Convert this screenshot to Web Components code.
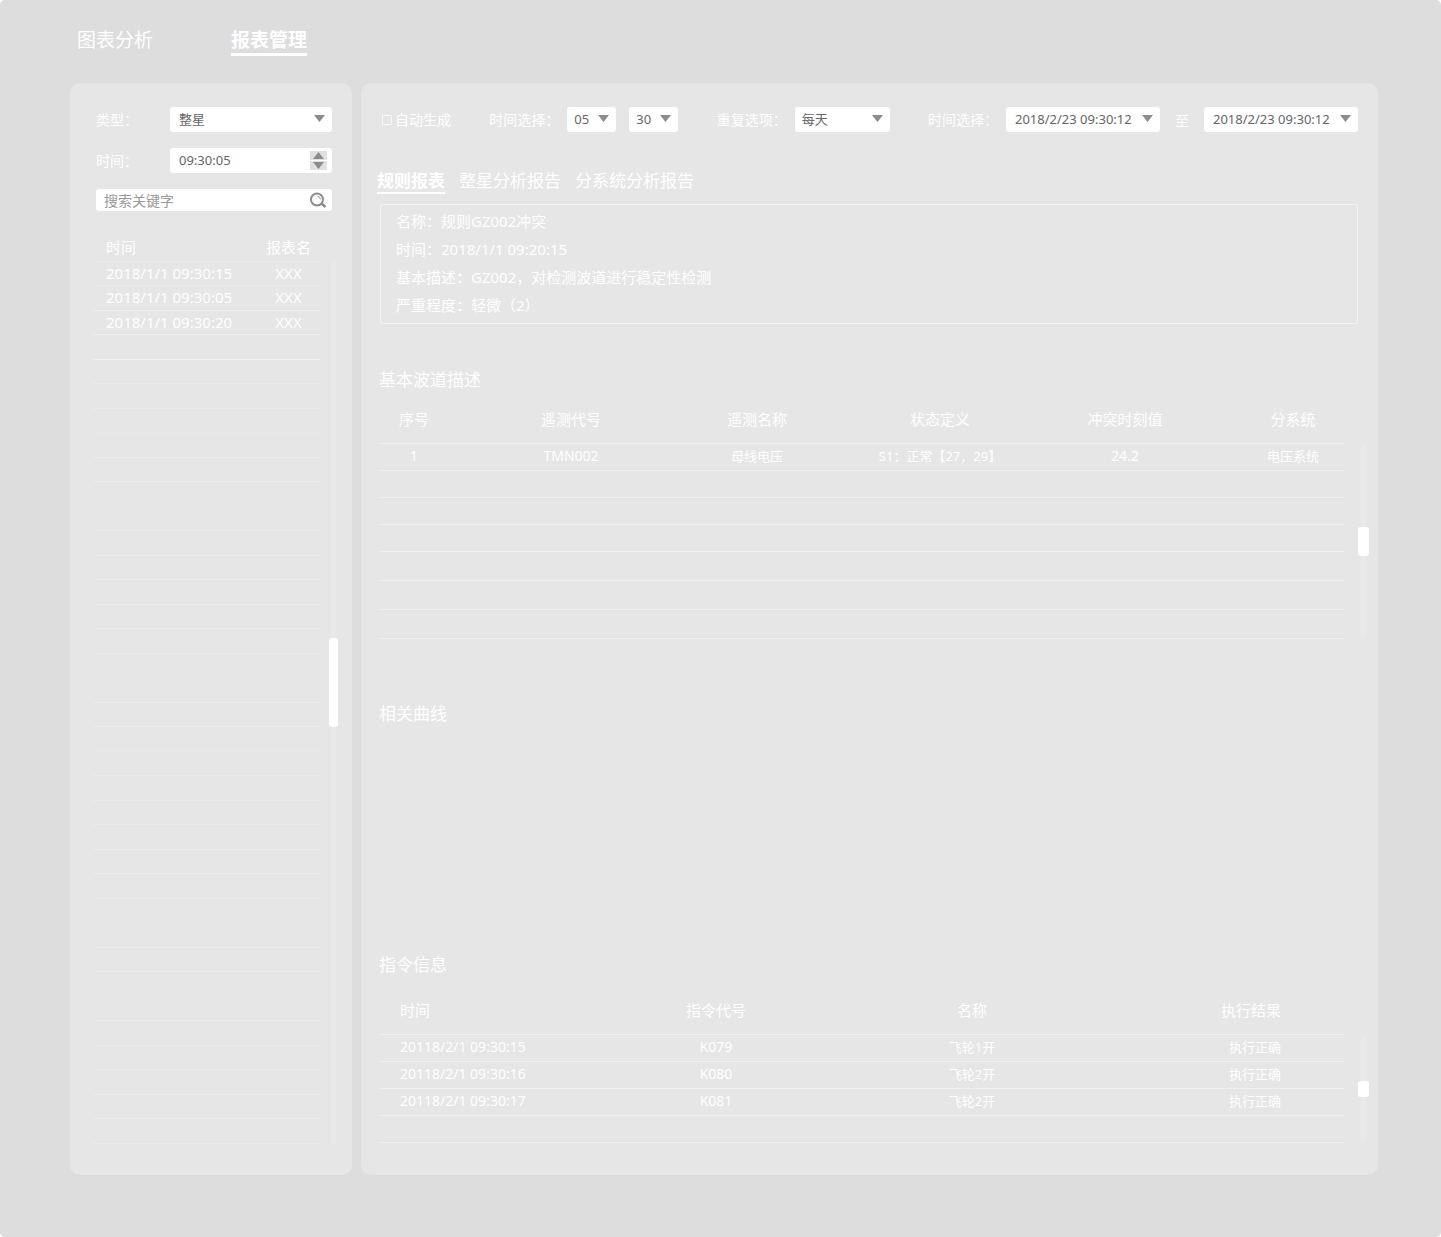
<!DOCTYPE html>
<html lang="zh-CN">
<head>
<meta charset="utf-8">
<title>报表管理</title>
<style>
  html, body { margin: 0; background: #fff; }
  body {
    font-family: "Noto Sans", "Noto Sans CJK SC", sans-serif;
    font-size: 14px;
    color: #fff;
    --page: #ddd;
    --panel: #e6e6e6;
    --line: #f0f0f0;
    --line-soft: #ebebeb;
    --line-faint: #e8e8e8;
    --ink: #666;
    --icon: #8c8c8c;
  }
</style>
</head>
<body>
<report-page></report-page>

<script>
const base = `
  *, *::before, *::after { box-sizing: border-box; }
  button, input, select { font: inherit; color: inherit; margin: 0; border: 0; padding: 0; background: none; }
`;

function define(name, render) {
  customElements.define(name, class extends HTMLElement {
    connectedCallback() {
      if (this.shadowRoot) return;
      this.attachShadow({ mode: 'open' });
      this.shadowRoot.innerHTML = `<style>${base}</style>` + render(this);
    }
  });
}

/* Top navigation */
define('top-nav', () => `
  <style>
    :host { display: block; padding: 27px 77px; }
    nav { display: flex; gap: 78px; }
    a { color: #fff; text-decoration: none; font-size: 19px; line-height: 26px; border-bottom: 3px solid transparent; }
    a[aria-current] { font-weight: 700; border-color: #fff; }
  </style>
  <nav>
    <a href="#charts">图表分析</a>
    <a href="#reports" aria-current="page">报表管理</a>
  </nav>`);

/* Rounded panel */
define('side-panel', () => `
  <style>:host { display: flex; flex-direction: column; background: var(--panel); border-radius: 10px; }</style>
  <slot></slot>`);

/* Labelled drop-down */
define('select-field', el => {
  const label = el.getAttribute('label');
  const options = el.getAttribute('options').split('|').map(o => `<option>${o}</option>`).join('');
  return `
  <style>
    :host { display: flex; align-items: center; gap: 8px; }
    :host([wide]) { gap: 0; }
    :host([wide]) label { width: 74px; }
    :host([wide]) .box { flex: 1; }
    label { line-height: 25px; white-space: nowrap; }
    .box { display: grid; align-items: center; height: 25px; width: var(--field-width, auto); background: #fff; border-radius: 3px; }
    select, svg { grid-area: 1 / 1; }
    select { appearance: none; width: 100%; height: 25px; padding: 0 0 2px var(--field-inset, 7px); font-size: 13px; color: var(--ink); border-radius: 3px; }
    svg { justify-self: end; margin: 0 7px 2px 0; pointer-events: none; fill: var(--icon); }
  </style>
  ${label ? `<label for="s">${label}</label>` : ''}
  <div class="box">
    <select id="s" ${label ? '' : `aria-label="${el.getAttribute('name')}"`}>${options}</select>
    <svg width="11" height="7" viewBox="0 0 11 7"><path d="M0 0H11L5.5 7Z"/></svg>
  </div>`;
});

/* Labelled time box with stepper */
define('time-field', el => `
  <style>
    :host { display: flex; align-items: center; }
    label { width: 74px; line-height: 25px; }
    .box { flex: 1; min-width: 0; display: flex; align-items: center; height: 25px; padding-right: 5px; background: #fff; border-radius: 3px; }
    input { flex: 1; min-width: 0; height: 25px; padding: 0 0 2px 9px; font-size: 13px; color: var(--ink); }
    .step { display: flex; flex-direction: column; gap: 1px; }
    button { display: grid; place-items: center; width: 17px; height: 9px; background: #e0e0e0; }
    svg { fill: var(--icon); display: block; }
  </style>
  <label for="t">${el.getAttribute('label')}</label>
  <div class="box">
    <input id="t" type="text" value="${el.getAttribute('value')}">
    <div class="step">
      <button type="button" aria-label="+"><svg width="11" height="7" viewBox="0 0 11 7"><path d="M0 7H11L5.5 0Z"/></svg></button>
      <button type="button" aria-label="-"><svg width="11" height="7" viewBox="0 0 11 7"><path d="M0 0H11L5.5 7Z"/></svg></button>
    </div>
  </div>`);

/* Search box */
define('search-field', () => `
  <style>
    :host { display: flex; align-items: center; height: 22px; padding-right: 5px; background: #fff; border-radius: 3px; }
    input { flex: 1; min-width: 0; height: 22px; padding-left: 8px; color: var(--ink); }
    input::placeholder { color: #999; opacity: 1; }
    button { display: block; width: 18px; height: 18px; }
    svg { display: block; fill: none; stroke: var(--icon); }
  </style>
  <input type="text" placeholder="搜索关键字" aria-label="搜索关键字">
  <button type="button" aria-label="搜索">
    <svg width="18" height="18" viewBox="0 0 18 18">
      <circle cx="8" cy="8.5" r="6" stroke-width="2"/>
      <path d="M12.5 12.5L16.5 16" stroke-width="2.4"/>
      <path d="M8.5 5.2A3.6 3.6 0 0 1 11.4 8.4" stroke-width="1"/>
    </svg>
  </button>`);

/* Scroll rail: the space above and below the thumb is shared out by weight */
define('scroll-rail', el => `
  <style>
    :host { display: flex; flex-direction: column; align-items: center; width: var(--thumb-width, 11px); }
    i { width: 5px; background: #e9e9e9; }
    i:first-of-type { flex: ${el.getAttribute('above')}; border-radius: 3px 3px 0 0; }
    i:last-of-type { flex: ${el.getAttribute('below')}; border-radius: 0 0 3px 3px; }
    b { width: 100%; height: var(--thumb-height); background: #fff; border-radius: 3px; }
  </style>
  <i></i><b></b><i></i>`);

/* Left report list */
define('report-list', () => {
  const rows = [
    ['2018/1/1 09:30:15', 'XXX'],
    ['2018/1/1 09:30:05', 'XXX'],
    ['2018/1/1 09:30:20', 'XXX'],
    ...Array.from({ length: 33 }, () => ['', ''])
  ];
  return `
  <style>
    :host { display: flex; gap: 8px; padding: 24px 14px 30px 23px; }
    table { flex: 1; width: 100%; min-width: 0; border-spacing: 0; table-layout: fixed; font-size: 15px; line-height: 20px; }
    .time { width: 163px; } .name { width: 65px; }
    th { font-weight: 400; height: 27px; }
    th, td { padding: 0 0 2px; border-bottom: 1px solid var(--line-soft); text-align: center; white-space: nowrap; }
    th:first-child, td:first-child { text-align: left; padding-left: 13px; }
    td { height: 24px; }
    tbody tr:nth-child(even) td { height: 25px; }
    tbody tr:nth-child(n+2):nth-child(-n+4) td { border-color: var(--line); }
    tbody tr:nth-child(10n+7) td, tbody tr:nth-child(10n) td { border-color: var(--line-faint); }
    scroll-rail { margin-top: 26px; --thumb-width: 9px; --thumb-height: 89px; }
  </style>
  <table>
    <colgroup><col class="time"><col class="name"></colgroup>
    <thead><tr><th>时间</th><th>报表名</th></tr></thead>
    <tbody>${rows.map(r => `<tr><td>${r[0]}</td><td>${r[1]}</td></tr>`).join('')}</tbody>
  </table>
  <scroll-rail above="377" below="417"></scroll-rail>`;
});

/* Filter bar */
define('filter-bar', () => `
  <style>
    :host { display: flex; justify-content: space-between; align-items: center; }
    div { display: flex; align-items: center; gap: 13px; }
    .check { gap: 3px; }
    .range { gap: 15px; }
    input { appearance: none; width: 10px; height: 10px; border: 1px solid #fafafa; border-radius: 2px; }
    input:checked { background: #fff; }
    label { line-height: 25px; }
    .short { --field-width: 49px; }
    .mid { --field-width: 95px; }
    .long { --field-width: 154px; --field-inset: 9px; }
  </style>
  <div class="check"><input id="auto" type="checkbox"><label for="auto">自动生成</label></div>
  <div>
    <select-field class="short" label="时间选择：" options="05"></select-field>
    <select-field class="short" name="分" options="30"></select-field>
  </div>
  <select-field class="mid" label="重复选项：" options="每天"></select-field>
  <div class="range">
    <select-field class="long" label="时间选择：" options="2018/2/23 09:30:12"></select-field>
    <span>至</span>
    <select-field class="long" name="结束时间" options="2018/2/23 09:30:12"></select-field>
  </div>`);

/* Report tabs */
define('report-tabs', () => `
  <style>
    :host { display: flex; gap: 14px; }
    button { font-size: 17px; line-height: 22px; border-bottom: 2px solid transparent; }
    button[aria-selected=true] { font-weight: 700; border-color: #fff; }
  </style>
  <button type="button" role="tab" aria-selected="true">规则报表</button>
  <button type="button" role="tab" aria-selected="false">整星分析报告</button>
  <button type="button" role="tab" aria-selected="false">分系统分析报告</button>`);

/* Summary box */
define('report-summary', () => `
  <style>
    :host { display: block; border: 1px solid #f2f2f2; border-radius: 2px; padding: 2px 15px 4px; font-size: 15px; line-height: 28px; }
    p { margin: 0; }
  </style>
  <p>名称：规则GZ002冲突</p>
  <p>时间：2018/1/1 09:20:15</p>
  <p>基本描述：GZ002，对检测波道进行稳定性检测</p>
  <p>严重程度：轻微（2）</p>`);

/* Titled section */
define('report-section', el => `
  <style>
    :host { display: block; }
    h2 { margin: 0; font-size: 17px; line-height: 24px; font-weight: 400; }
  </style>
  <h2>${el.getAttribute('heading')}</h2>
  <slot></slot>`);

const tableStyle = `
  :host { display: flex; gap: 14px; }
  table { flex: 1; width: 100%; min-width: 0; border-spacing: 0; table-layout: fixed; }
  th, td { padding: 0; border-bottom: 1px solid var(--line); text-align: center; white-space: nowrap; }
  th { height: 50px; font-size: 15px; font-weight: 400; }
  td { height: 27px; padding-bottom: 2px; font-size: 13px; line-height: 20px; }
  td.num { font-size: 14px; }
  scroll-rail { margin-top: 49px; }
`;
const cols = widths => `<colgroup>${widths.map(w => `<col style="width:${w}px">`).join('')}</colgroup>`;
const head = names => `<thead><tr>${names.map(n => `<th>${n}</th>`).join('')}</tr></thead>`;
const body = rows => `<tbody>${rows.map(r => `<tr>${r.map(c =>
  `<td${/^[\x20-\x7e]+$/.test(c) ? ' class="num"' : ''}>${c}</td>`).join('')}</tr>`).join('')}</tbody>`;
const blank = (n, width) => Array.from({ length: n }, () => Array(width).fill(''));

/* Channel table */
define('channel-table', () => `
  <style>
    ${tableStyle}
    th:first-child, td:first-child { padding-right: 51px; }
    tbody tr:nth-child(n+5) td { height: 29px; }
    scroll-rail { --thumb-height: 29px; }
  </style>
  <table>
    ${cols([121, 142, 230, 136, 234, 102])}
    ${head(['序号', '遥测代号', '遥测名称', '状态定义', '冲突时刻值', '分系统'])}
    ${body([['1', 'TMN002', '母线电压', 'S1：正常【27，29】', '24.2', '电压系统'], ...blank(6, 6)])}
  </table>
  <scroll-rail above="1" below="1"></scroll-rail>`);

/* Command table */
define('command-table', () => `
  <style>
    ${tableStyle}
    th:first-child, td:first-child { text-align: left; padding-left: 21px; }
    th:last-child, td:last-child { text-align: right; padding-right: 63px; }
    scroll-rail { --thumb-height: 16px; }
  </style>
  <table>
    ${cols([209, 256, 256, 244])}
    ${head(['时间', '指令代号', '名称', '执行结果'])}
    ${body([
      ['20118/2/1 09:30:15', 'K079', '飞轮1开', '执行正确'],
      ['20118/2/1 09:30:16', 'K080', '飞轮2开', '执行正确'],
      ['20118/2/1 09:30:17', 'K081', '飞轮2开', '执行正确'],
      ...blank(1, 4)
    ])}
  </table>
  <scroll-rail above="1" below="1"></scroll-rail>`);

/* Whole page */
define('report-page', () => `
  <style>
    :host { display: block; min-height: 100vh; background: var(--page); border-radius: 5px; }
    main { display: flex; gap: 9px; padding: 0 63px 62px 70px; }
    .left { flex: 0 0 282px; min-width: 0; }
    .right { flex: 1; min-width: 0; padding: 24px 9px 32px 16px; }
    form { display: flex; flex-direction: column; gap: 16px; padding: 24px 20px 0 26px; }
    .left select-field { --field-inset: 9px; }
    filter-bar { margin: 0 11px 0 5px; }
    report-tabs { margin-top: 38px; }
    report-summary { margin: 10px 11px 0 3px; }
    report-section { padding-left: 2px; }
    .channels { margin-top: 44px; }
    channel-table { margin-top: 2px; }
    .curves { margin-top: 63px; }
    .plot { height: 227px; }
    command-table { margin-top: 8px; }
  </style>
  <top-nav></top-nav>
  <main>
    <side-panel class="left">
      <form>
        <select-field wide label="类型：" options="整星"></select-field>
        <time-field label="时间：" value="09:30:05"></time-field>
        <search-field></search-field>
      </form>
      <report-list></report-list>
    </side-panel>
    <side-panel class="right">
      <filter-bar></filter-bar>
      <report-tabs role="tablist"></report-tabs>
      <report-summary></report-summary>
      <report-section class="channels" heading="基本波道描述"><channel-table></channel-table></report-section>
      <report-section class="curves" heading="相关曲线"><div class="plot"></div></report-section>
      <report-section heading="指令信息"><command-table></command-table></report-section>
    </side-panel>
  </main>`);
</script>
</body>
</html>
